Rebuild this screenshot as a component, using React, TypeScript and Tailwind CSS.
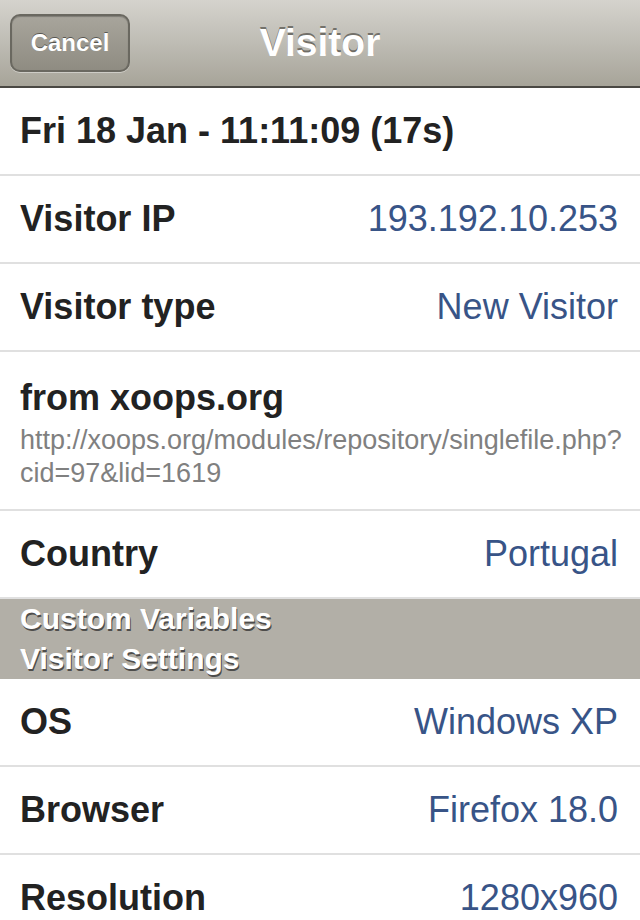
import React from "react";

type Row = { label: string; value?: string };

const topRows: Row[] = [
  { label: "Visitor IP", value: "193.192.10.253" },
  { label: "Visitor type", value: "New Visitor" },
];

const settingsRows: Row[] = [
  { label: "OS", value: "Windows XP" },
  { label: "Browser", value: "Firefox 18.0" },
  { label: "Resolution", value: "1280x960" },
];

const font = { fontFamily: '"Liberation Sans", Arial, sans-serif' };

const DetailRow = ({ label, value }: Row) => (
  <div className="flex h-[88px] items-center justify-between border-b-2 border-[#e0e0e0] bg-white pl-5 pr-[22px]">
    <div className="text-[36px] font-bold text-[#222222]">{label}</div>
    {value && <div className="text-[36px] text-[#385487]">{value}</div>}
  </div>
);

export default function App() {
  return (
    <div className="w-[640px] overflow-hidden bg-white" style={font}>
      {/* nav bar */}
      <div className="relative flex h-[88px] items-center justify-center border-b-2 border-[#4a4843] bg-gradient-to-b from-[#d5d3cd] via-[#bebcb4] to-[#a7a499]">
        <button className="absolute left-[10px] top-[14px] flex h-[58px] w-[120px] items-center justify-center rounded-[10px] border-2 border-[#6a6860] bg-gradient-to-b from-[#a8a59c] to-[#8f8c82] text-[24px] font-bold text-white shadow-[inset_0_1px_1px_rgba(0,0,0,0.25),0_1px_0_rgba(255,255,255,0.4)] [text-shadow:0_-1px_0_rgba(0,0,0,0.45)]">
          Cancel
        </button>
        <div className="text-[39px] font-bold text-white [text-shadow:0_-2px_0_rgba(60,58,52,0.6)]">
          Visitor
        </div>
      </div>

      <div className="flex h-[88px] items-center border-b-2 border-[#e0e0e0] px-5">
        <div className="text-[36px] font-bold text-[#222222]">
          Fri 18 Jan - 11:11:09 (17s)
        </div>
      </div>

      {topRows.map((r) => (
        <DetailRow key={r.label} {...r} />
      ))}

      <div className="border-b-2 border-[#e0e0e0] px-5 pb-[19px] pt-[26px]">
        <div className="text-[36px] font-bold leading-[40px] text-[#222222]">
          from xoops.org
        </div>
        <div className="mt-[6px] text-[27px] leading-[33px] text-[#808080]">
          http://xoops.org/modules/repository/singlefile.php?
          <br />
          cid=97&amp;lid=1619
        </div>
      </div>

      <DetailRow label="Country" value="Portugal" />

      <div className="bg-[#b2afa7] px-5 text-[30px] font-bold leading-[40px] text-white [text-shadow:1px_2px_0_rgba(50,50,50,0.8)]">
        <div>Custom Variables</div>
        <div>Visitor Settings</div>
      </div>

      {settingsRows.map((r) => (
        <DetailRow key={r.label} {...r} />
      ))}
    </div>
  );
}
